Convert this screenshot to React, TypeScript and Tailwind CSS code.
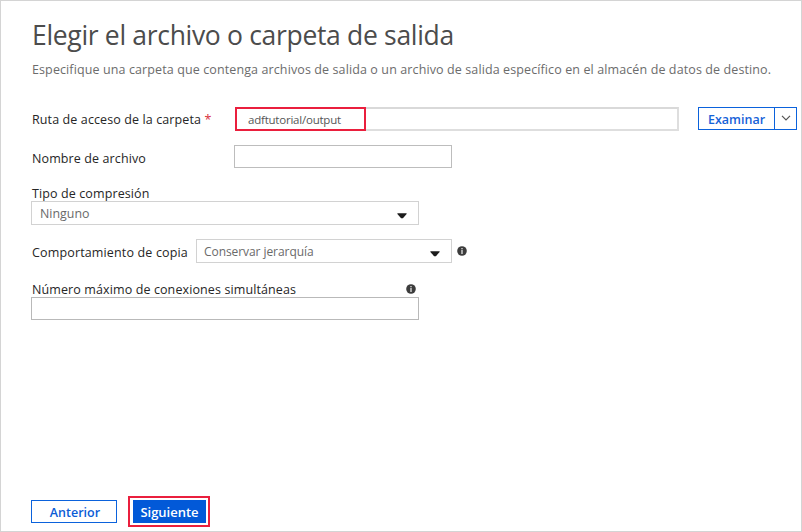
import React from 'react';

function Label({ children, className = '' }: { children: React.ReactNode; className?: string }) {
  return (
    <label className={`block whitespace-nowrap pl-px text-[12.5px] leading-[20px] tracking-[0.11px] text-[#262626] ${className}`}>
      {children}
    </label>
  );
}

function InfoIcon() {
  return (
    <svg width="10" height="10" viewBox="0 0 10 10" className="shrink-0" aria-label="Información">
      <circle cx="5" cy="5" r="4.8" fill="#3c3c3c" />
      <rect x="4.3" y="2" width="1.4" height="1.3" fill="#d8d8d8" />
      <rect x="4.3" y="4" width="1.4" height="4" fill="#d8d8d8" />
    </svg>
  );
}

function Caret() {
  return (
    <svg width="10" height="6" viewBox="0 0 10 6" className="mt-[6px] shrink-0">
      <path d="M0.4 0.3H9.6V1.1L5.9 5.2H4.1L0.4 1.1Z" fill="#1c1c1c" />
    </svg>
  );
}

export default function App() {
  return (
    <main className="flex h-[532px] w-[802px] flex-col overflow-hidden border border-[#d4d4d4] bg-white pl-[30px] font-['Open_Sans','Noto_Sans',sans-serif]">
      <h1 className="mt-[16px] h-[36px] whitespace-nowrap pl-px text-[26.5px] leading-[36px] tracking-[-0.32px] text-[#4c4c4c]">
        Elegir el archivo o carpeta de salida
      </h1>
      <p className="mt-[7px] h-[20px] whitespace-nowrap pl-px text-[12.5px] leading-[20px] tracking-[0.11px] text-[#6c6c6c]">
        Especifique una carpeta que contenga archivos de salida o un archivo de salida específico en el almacén de datos de destino.
      </p>

      <div className="mt-[26px] flex h-[24px] items-start">
        <Label className="mt-[4px] w-[204px]">
          Ruta de acceso de la carpeta <span className="text-[#d8303c]">*</span>
        </Label>
        <div className="mt-px flex h-[24px] w-[444px] border-2 border-[#dedede] border-l-0 border-t-[#d9d9d9]">
          <div className="-my-[2px] flex h-[24px] w-[131px] items-center whitespace-nowrap border-2 border-[#ea1f3d] pl-[11px] pt-[2px] text-[11.5px] tracking-[-0.22px] text-[#565656]">
            adftutorial/output
          </div>
        </div>
        <div className="ml-[19px] mt-px flex h-[23px] w-[99px] shrink-0 border border-[#0b62dc]">
          <button className="w-[76px] whitespace-nowrap border-r border-[#0b62dc] pt-px text-[12.5px] font-semibold leading-[22px] text-[#1662d8]">
            Examinar
          </button>
          <button className="flex flex-1 items-center justify-center pb-[2px]">
            <svg width="10" height="6" viewBox="0 0 10 6" fill="none">
              <path d="M1 0.8L5 4.8L9 0.8" stroke="#555" strokeWidth="1.2" />
            </svg>
          </button>
        </div>
      </div>

      <div className="mt-[15px] flex h-[24px]">
        <Label className="mt-[4px] w-[203px]">Nombre de archivo</Label>
        <div className="h-[23px] w-[218px] border border-[#bdbdbd]" />
      </div>

      <Label className="mt-[15px] h-[17px]">Tipo de compresión</Label>
      <div className="flex h-[24px] w-[388px] items-center justify-between border border-[#d2d2d2] pl-[8px] pr-[11px] text-[12.4px] text-[#6a6a6a]">
        <span className="pt-[2px]">Ninguno</span>
        <Caret />
      </div>

      <div className="mt-[14px] flex h-[24px]">
        <Label className="mt-[4px] w-[165px] tracking-[0.15px]">Comportamiento de copia</Label>
        <div className="flex h-[24px] w-[256px] items-center justify-between border border-[#d2d2d2] pl-[7px] pr-[11px] text-[12px] text-[#6a6a6a]">
          <span className="pt-[2px] tracking-[-0.07px]">Conservar jerarquía</span>
          <Caret />
        </div>
        <div className="ml-[5px] mt-[7px]">
          <InfoIcon />
        </div>
      </div>

      <div className="mt-[17px] flex h-[17px] w-[388px] justify-between pr-[3px]">
        <Label className="tracking-[0.06px]">Número máximo de conexiones simultáneas</Label>
        <div className="mt-[4px]">
          <InfoIcon />
        </div>
      </div>
      <div className="h-[23px] w-[388px] border border-[#b9b9b9]" />

      <div className="mt-auto flex h-[35px] items-start">
        <button className="mt-[4px] h-[23px] w-[86px] border border-[#0b62dc] pl-[2px] pt-px text-[12.5px] font-semibold leading-[22px] text-[#0b5cd6]">
          Anterior
        </button>
        <div className="ml-[11px] flex h-[31px] w-[82px] items-center justify-center border-2 border-[#ea1f3d]">
          <button className="h-[23px] w-[73px] bg-[#0259d8] pl-px pt-px text-[13px] font-semibold leading-[23px] text-white">
            Siguiente
          </button>
        </div>
      </div>
    </main>
  );
}
